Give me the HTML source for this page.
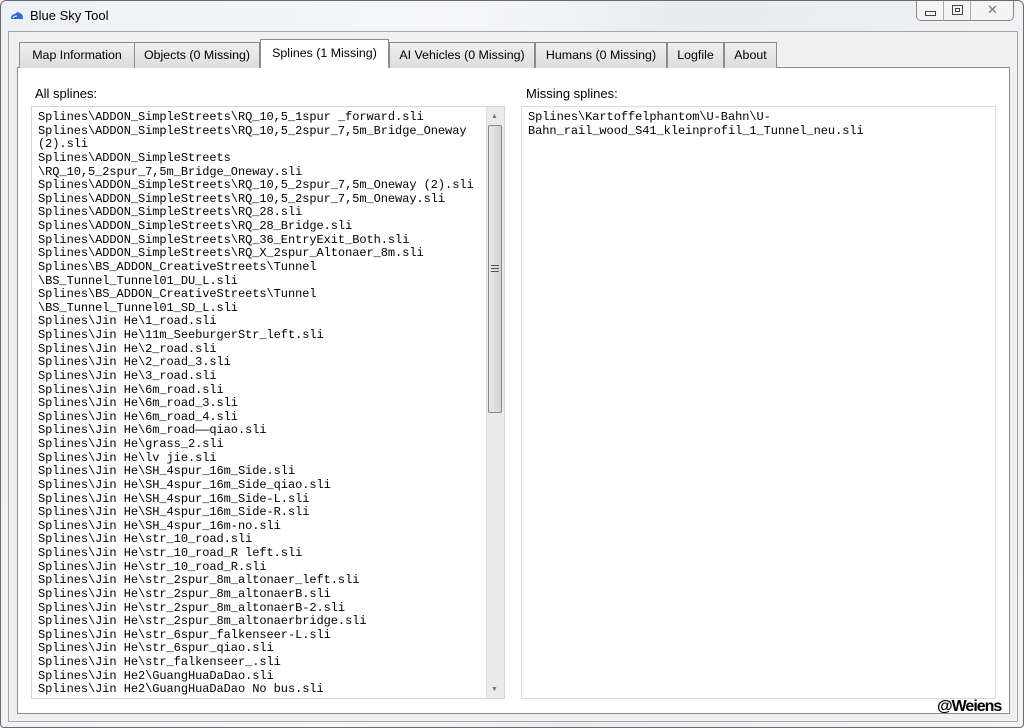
<!DOCTYPE html>
<html><head><meta charset="utf-8"><style>
*{margin:0;padding:0;box-sizing:border-box}
body{width:1024px;height:728px;overflow:hidden;background:#fff;font-family:"Liberation Sans","DejaVu Sans",sans-serif;position:relative}
.win{position:absolute;left:0;top:0;width:1024px;height:728px;border:1px solid #6a6a6a;border-radius:6px 6px 4px 4px;background:linear-gradient(100deg,#eef0f3 0%,#f6f7f9 40%,#e9ebee 60%,#f3f4f6 100%)}
.title{position:absolute;left:29px;top:7px;font-size:13px;color:#000}
.client{position:absolute;left:7px;top:30px;width:1010px;height:691px;background:#f0f0f0;border:1px solid #a8a8a8}
.tabs{position:absolute;left:16px;top:40px}
.tab{position:absolute;top:1px;height:26px;border:1px solid #8c8c8c;border-bottom:none;background:linear-gradient(#f0f0f0,#dcdcdc);font-size:12.4px;color:#000;padding:5px 0 0 0;text-align:center;white-space:nowrap}
.tab.sel{top:-2px;height:29px;background:#fff;z-index:2;padding-top:6px}
.panel{position:absolute;left:16px;top:66px;width:993px;height:647px;background:#fff;border:1px solid #8c8c8c}
.lbl{position:absolute;font-size:13px;color:#000}
.list{position:absolute;background:#fff;border:1px solid #c8d8e8;font-family:"Liberation Mono",monospace;font-size:12px;letter-spacing:-0.06px;line-height:13.62px;color:#000;white-space:pre;overflow:hidden;padding:4px 0 0 6px}
.sb{position:absolute;left:485px;top:106px;width:18px;height:591px;background:#eaeaea;border-left:1px solid #e0e0e0}
.thumb{position:absolute;left:487px;top:124px;width:14px;height:288px;border:1px solid #8a8a8a;border-radius:2px;background:linear-gradient(90deg,#e8e8e8,#d2d2d2)}
.btns{position:absolute;left:915px;top:0;width:98px;height:20px;border:1px solid #8a8a8a;border-top:none;border-radius:0 0 5px 5px;background:#f4f4f4}
</style></head><body>
<div class="win">
<svg style="position:absolute;left:9px;top:10px" width="14" height="9"><path d="M1 8 Q1 3 5 3 Q7 0 10 2 Q13 3 13 8 Z" fill="#2a6fd0"/><path d="M3 7 Q4 5 7 5" stroke="#fff" fill="none"/></svg>
<div class="title">Blue Sky Tool</div>
<div class="btns">
<div style="position:absolute;left:26px;top:0;height:20px;border-left:1px solid #aaa"></div>
<div style="position:absolute;left:53px;top:0;height:20px;border-left:1px solid #aaa"></div>
<div style="position:absolute;left:8px;top:10px;width:11px;height:5px;border:1px solid #444"></div>
<div style="position:absolute;left:35px;top:4px;width:11px;height:10px;border:1px solid #444"><div style="position:absolute;left:2px;top:2px;width:5px;height:4px;border:1px solid #444"></div></div>
<div style="position:absolute;left:70px;top:1px;font-size:13px;color:#777">✕</div>
</div>
<div class="client"></div>
<div class="panel"></div>
<div class="tabs">
<div class="tab" style="left:2px;width:116px">Map Information</div>
<div class="tab" style="left:117px;width:126px">Objects (0 Missing)</div>
<div class="tab sel" style="left:243px;width:129px">Splines (1 Missing)</div>
<div class="tab" style="left:372px;width:146px">AI Vehicles (0 Missing)</div>
<div class="tab" style="left:518px;width:132px">Humans (0 Missing)</div>
<div class="tab" style="left:650px;width:57px">Logfile</div>
<div class="tab" style="left:707px;width:53px">About</div>
</div>
<div class="lbl" style="left:34px;top:85px">All splines:</div>
<div class="lbl" style="left:525px;top:85px">Missing splines:</div>
<div class="list" style="left:30px;top:105px;width:474px;height:593px">Splines\ADDON_SimpleStreets\RQ_10,5_1spur _forward.sli
Splines\ADDON_SimpleStreets\RQ_10,5_2spur_7,5m_Bridge_Oneway
(2).sli
Splines\ADDON_SimpleStreets
\RQ_10,5_2spur_7,5m_Bridge_Oneway.sli
Splines\ADDON_SimpleStreets\RQ_10,5_2spur_7,5m_Oneway (2).sli
Splines\ADDON_SimpleStreets\RQ_10,5_2spur_7,5m_Oneway.sli
Splines\ADDON_SimpleStreets\RQ_28.sli
Splines\ADDON_SimpleStreets\RQ_28_Bridge.sli
Splines\ADDON_SimpleStreets\RQ_36_EntryExit_Both.sli
Splines\ADDON_SimpleStreets\RQ_X_2spur_Altonaer_8m.sli
Splines\BS_ADDON_CreativeStreets\Tunnel
\BS_Tunnel_Tunnel01_DU_L.sli
Splines\BS_ADDON_CreativeStreets\Tunnel
\BS_Tunnel_Tunnel01_SD_L.sli
Splines\Jin He\1_road.sli
Splines\Jin He\11m_SeeburgerStr_left.sli
Splines\Jin He\2_road.sli
Splines\Jin He\2_road_3.sli
Splines\Jin He\3_road.sli
Splines\Jin He\6m_road.sli
Splines\Jin He\6m_road_3.sli
Splines\Jin He\6m_road_4.sli
Splines\Jin He\6m_road——qiao.sli
Splines\Jin He\grass_2.sli
Splines\Jin He\lv jie.sli
Splines\Jin He\SH_4spur_16m_Side.sli
Splines\Jin He\SH_4spur_16m_Side_qiao.sli
Splines\Jin He\SH_4spur_16m_Side-L.sli
Splines\Jin He\SH_4spur_16m_Side-R.sli
Splines\Jin He\SH_4spur_16m-no.sli
Splines\Jin He\str_10_road.sli
Splines\Jin He\str_10_road_R left.sli
Splines\Jin He\str_10_road_R.sli
Splines\Jin He\str_2spur_8m_altonaer_left.sli
Splines\Jin He\str_2spur_8m_altonaerB.sli
Splines\Jin He\str_2spur_8m_altonaerB-2.sli
Splines\Jin He\str_2spur_8m_altonaerbridge.sli
Splines\Jin He\str_6spur_falkenseer-L.sli
Splines\Jin He\str_6spur_qiao.sli
Splines\Jin He\str_falkenseer_.sli
Splines\Jin He2\GuangHuaDaDao.sli
Splines\Jin He2\GuangHuaDaDao No bus.sli</div>
<div class="sb"></div>
<div style="position:absolute;left:490px;top:112px;font-size:7px;color:#777">▲</div>
<div style="position:absolute;left:490px;top:685px;font-size:7px;color:#777">▼</div>
<div class="thumb"><div style="position:absolute;left:2px;top:139px;width:8px;height:7px;border-top:1px solid #555;border-bottom:1px solid #555"><div style="margin-top:2px;border-top:1px solid #555"></div></div></div>
<div class="list" style="left:520px;top:105px;width:475px;height:593px;border-color:#dcdcdc">Splines\Kartoffelphantom\U-Bahn\U-
Bahn_rail_wood_S41_kleinprofil_1_Tunnel_neu.sli</div>
<div style="position:absolute;left:936px;top:697px;font-size:16px;font-weight:bold;color:#000;letter-spacing:-1px">@Weiens</div>
</div>
</body></html>
